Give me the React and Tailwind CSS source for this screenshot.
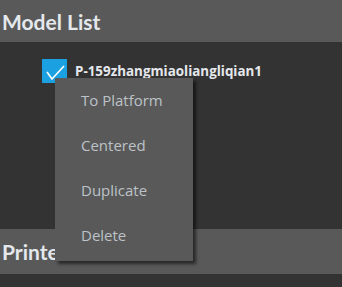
import React from "react";

const items = ["To Platform", "Centered", "Duplicate", "Delete"];

const App = () => {
  return (
    <div className="relative w-[342px] h-[287px] overflow-hidden bg-[#333333] font-['Lato',sans-serif]">
      <div className="h-[42px] bg-[#595959] flex items-center pl-[2px]">
        <h2 className="text-[21px] font-bold text-[#e4e8ec] leading-none">Model List</h2>
      </div>

      <div className="h-[187px] pt-[17px] pl-[42px]">
        <div className="flex items-center gap-[8px]">
          <div className="w-[25px] h-[24px] bg-[#1ba1e2]">
            <svg width="25" height="24" viewBox="0 0 25 24">
              <path d="M5 13 L10 20 L22 7" stroke="white" strokeWidth="1.6" fill="none" />
            </svg>
          </div>
          <span className="text-[13.4px] font-bold text-[#e4e8ec] font-['Open_Sans',sans-serif]">
            P-159zhangmiaoliangliqian1
          </span>
        </div>
      </div>

      <div className="h-[45px] bg-[#595959] flex items-center pl-[2px]">
        <h2 className="text-[21px] font-bold text-[#e4e8ec] leading-none">Printer</h2>
      </div>

      <div className="absolute left-[55px] top-[78px] w-[138px] h-[183px] bg-[#595959] shadow-[3px_3px_3px_rgba(0,0,0,0.55)] font-['Open_Sans',sans-serif]">
        {items.map((item) => (
          <div key={item} className="h-[45px] flex items-center pl-[26px] text-[15px] text-[#bcc2c8]">
            {item}
          </div>
        ))}
      </div>
    </div>
  );
};

export default App;
